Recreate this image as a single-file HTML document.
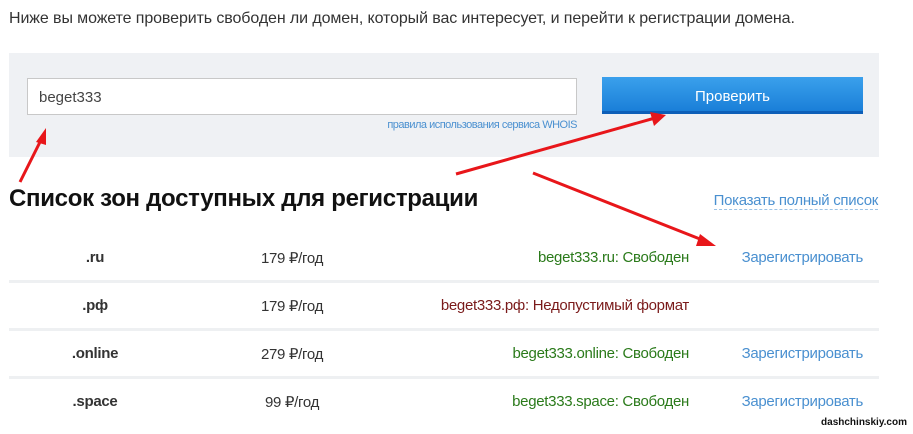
<html><head><style>
body{margin:0;width:913px;height:434px;background:#fff;font-family:"Liberation Sans",sans-serif;color:#333;position:relative;overflow:hidden}
.a{position:absolute;white-space:nowrap}
.t{font-size:15px;letter-spacing:-0.3px}
.sep{position:absolute;left:9px;width:870px;height:3px;background:#eef0f2}
.g{color:#2a7a1a}.b{color:#4a90d0}
</style></head><body>
<div class="a" style="left:9px;top:10px;font-size:16px;letter-spacing:-0.1px">Ниже вы можете проверить свободен ли домен, который вас интересует, и перейти к регистрации домена.</div>
<div class="a" style="left:9px;top:53px;width:870px;height:104px;background:#eff1f4"></div>
<div class="a" style="left:27px;top:78px;width:548px;height:35px;background:#fff;border:1px solid #c8c8c8"></div>
<div class="a" style="left:39px;top:89px;color:#444;font-size:15px">beget333</div>
<div class="a" style="right:336px;top:119px;font-size:11px;letter-spacing:-0.5px;color:#4a90d0">правила использования сервиса WHOIS</div>
<div class="a" style="left:602px;top:77px;width:261px;height:37px;background:linear-gradient(#3aa0ec,#1a7fd8);border-bottom:3px solid #0d5fb8;box-sizing:border-box;color:#fff;text-align:center;line-height:40px;font-size:15px">Проверить</div>
<div class="a" style="left:9px;top:185px;font-size:24px;font-weight:bold;letter-spacing:-0.3px;color:#111">Список зон доступных для регистрации</div>
<div class="a" style="right:35px;top:192px;font-size:15px;letter-spacing:-0.3px;color:#4a90d0;border-bottom:1px dashed #9cc3e6">Показать полный список</div>
<div class="sep" style="top:280px"></div><div class="sep" style="top:328px"></div><div class="sep" style="top:376px"></div>
<div class="a t" style="left:45px;width:100px;text-align:center;top:249px;font-weight:bold">.ru</div>
<div class="a t" style="left:45px;width:100px;text-align:center;top:297px;font-weight:bold">.рф</div>
<div class="a t" style="left:45px;width:100px;text-align:center;top:345px;font-weight:bold">.online</div>
<div class="a t" style="left:45px;width:100px;text-align:center;top:393px;font-weight:bold">.space</div>
<div class="a t" style="left:242px;width:100px;text-align:center;top:249px">179 ₽/год</div>
<div class="a t" style="left:242px;width:100px;text-align:center;top:297px">179 ₽/год</div>
<div class="a t" style="left:242px;width:100px;text-align:center;top:345px">279 ₽/год</div>
<div class="a t" style="left:242px;width:100px;text-align:center;top:393px">99 ₽/год</div>
<div class="a t g" style="right:224px;top:249px">beget333.ru: Свободен</div>
<div class="a t" style="right:224px;top:297px;color:#7a1a1a">beget333.рф: Недопустимый формат</div>
<div class="a t g" style="right:224px;top:345px">beget333.online: Свободен</div>
<div class="a t g" style="right:224px;top:393px">beget333.space: Свободен</div>
<div class="a t b" style="right:50px;top:249px">Зарегистрировать</div>
<div class="a t b" style="right:50px;top:345px">Зарегистрировать</div>
<div class="a t b" style="right:50px;top:393px">Зарегистрировать</div>
<div class="a" style="right:6px;top:417px;font-size:10px;font-weight:bold;color:#111">dashchinskiy.com</div>
<svg class="a" style="left:0;top:0" width="913" height="434">
<g stroke="#e8161a" stroke-width="3" fill="#e8161a">
<line x1="20" y1="182" x2="42" y2="138"/><polygon points="46,128 36,142 46,145" stroke="none"/>
<line x1="456" y1="174" x2="655" y2="118"/><polygon points="666,115 650,112 654,126" stroke="none"/>
<line x1="533" y1="173" x2="705" y2="241"/><polygon points="716,246 700,234 696,246" stroke="none"/>
</g></svg>
</body></html>
